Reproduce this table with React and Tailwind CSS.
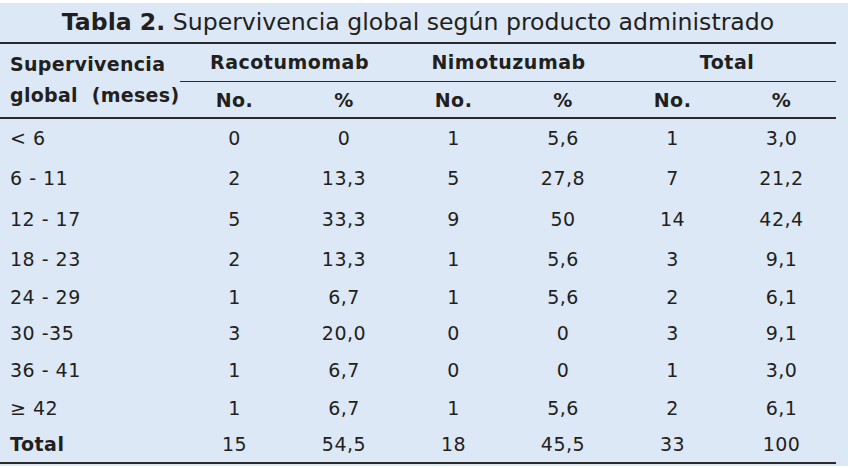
import React from "react";

const rows = [
  ["< 6", "0", "0", "1", "5,6", "1", "3,0"],
  ["6 - 11", "2", "13,3", "5", "27,8", "7", "21,2"],
  ["12 - 17", "5", "33,3", "9", "50", "14", "42,4"],
  ["18 - 23", "2", "13,3", "1", "5,6", "3", "9,1"],
  ["24 - 29", "1", "6,7", "1", "5,6", "2", "6,1"],
  ["30 -35", "3", "20,0", "0", "0", "3", "9,1"],
  ["36 - 41", "1", "6,7", "0", "0", "1", "3,0"],
  ["≥ 42", "1", "6,7", "1", "5,6", "2", "6,1"],
];
const heights = ["h-[40px]", "h-[40px]", "h-[42px]", "h-[38px]", "h-[38px]", "h-[35px]", "h-[38px]", "h-[38px]"];

export default function App() {
  return (
    <div
      className="w-[848px] h-[468px] bg-[#dce8f6] border-t-[3px] border-b-[2px] border-white text-[#231f20] overflow-hidden"
      style={{ fontFamily: '"DejaVu Sans", Verdana, sans-serif' }}
    >
      <div className="w-[836px]">
        <div className="h-[39px] flex items-center justify-center text-[23.6px] leading-none pt-[1px] whitespace-nowrap">
          <span className="font-bold">Tabla 2.</span>
          <span>&nbsp;Supervivencia global según producto administrado</span>
        </div>
        <table className="w-[836px] table-fixed border-collapse text-[19px] tracking-[0.5px]">
          <colgroup>
            <col className="w-[180px]" />
            <col className="w-[109px]" />
            <col className="w-[110px]" />
            <col className="w-[109px]" />
            <col className="w-[110px]" />
            <col className="w-[109px]" />
            <col className="w-[109px]" />
          </colgroup>
          <thead className="font-bold">
            <tr className="border-t-2 border-[#2a2a2a] h-[38px]">
              <td rowSpan={2} className="pl-[10px] align-middle leading-[31px] border-b-2 border-[#2a2a2a] pb-[2px] whitespace-nowrap tracking-[0.3px]">
                Supervivencia
                <br />
                global&nbsp; (meses)
              </td>
              <td colSpan={2} className="text-center border-b border-[#2a2a2a] pt-[1px] leading-none">Racotumomab</td>
              <td colSpan={2} className="text-center border-b border-[#2a2a2a] pt-[1px] leading-none">Nimotuzumab</td>
              <td colSpan={2} className="text-center border-b border-[#2a2a2a] pt-[1px] leading-none">Total</td>
            </tr>
            <tr className="h-[37px] border-b-2 border-[#2a2a2a]">
              <td className="text-center pt-[3px] leading-none">No.</td>
              <td className="text-center pt-[3px] leading-none">%</td>
              <td className="text-center pt-[3px] leading-none">No.</td>
              <td className="text-center pt-[3px] leading-none">%</td>
              <td className="text-center pt-[3px] leading-none">No.</td>
              <td className="text-center pt-[3px] leading-none">%</td>
            </tr>
          </thead>
          <tbody className="leading-none">
            {rows.map((r, i) => (
              <tr key={i} className={heights[i]}>
                {r.map((c, j) => (
                  <td key={j} className={j === 0 ? "pl-[10px] whitespace-nowrap" : "text-center"}>
                    {c}
                  </td>
                ))}
              </tr>
            ))}
            <tr className="h-[36px] border-b-2 border-[#2a2a2a]">
              <td className="pl-[10px] font-bold">Total</td>
              <td className="text-center">15</td>
              <td className="text-center">54,5</td>
              <td className="text-center">18</td>
              <td className="text-center">45,5</td>
              <td className="text-center">33</td>
              <td className="text-center">100</td>
            </tr>
          </tbody>
        </table>
      </div>
    </div>
  );
}
